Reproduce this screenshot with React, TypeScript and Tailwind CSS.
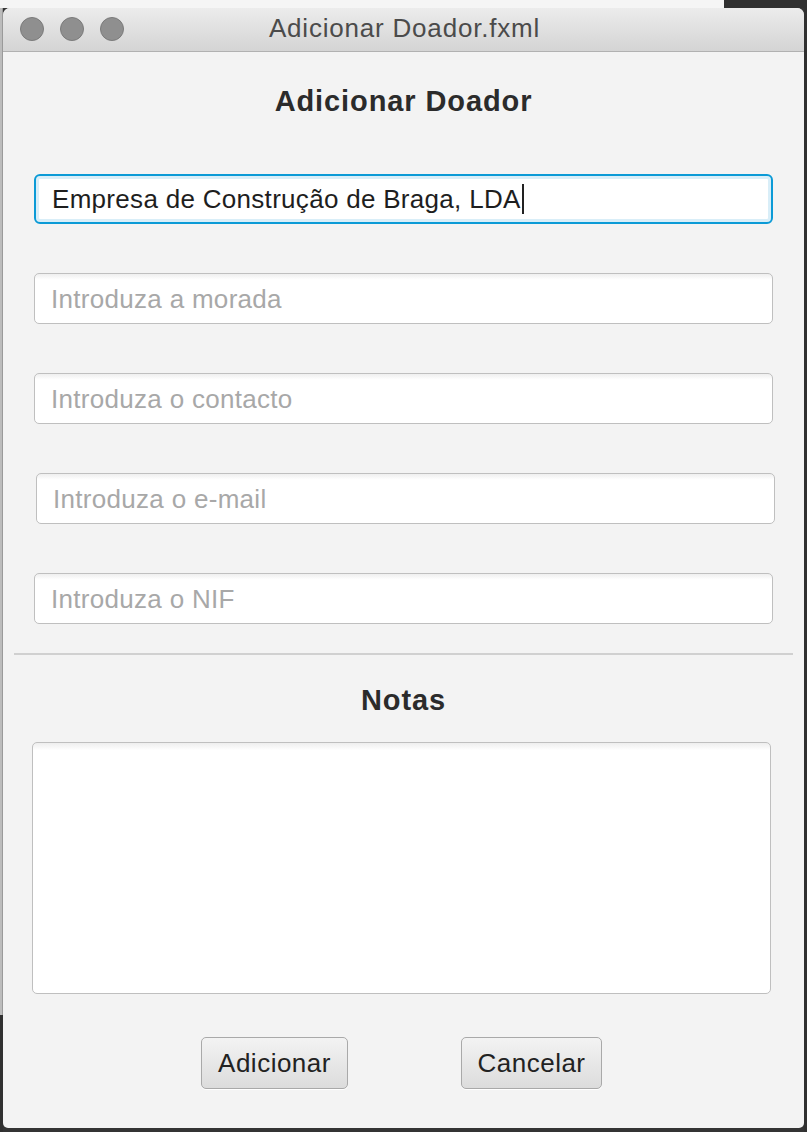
import React from "react";

const font = { fontFamily: '"Liberation Sans", Arial, Helvetica, sans-serif' };

function Field({ placeholder, shift = false }: { placeholder: string; shift?: boolean }) {
  return (
    <div className={`h-[51px] rounded-[5px] border-[1.5px] border-[#bfbfbf] bg-white bg-gradient-to-b from-[#efefef] from-0% to-white to-[12%] flex items-center pl-[16px] ${shift ? "ml-[2px] -mr-[2px]" : ""}`}>
      <span className="text-[26px] leading-none text-[#a8a8a8] tracking-[0.3px]">{placeholder}</span>
    </div>
  );
}

export default function App() {
  return (
    <div className="w-[807px] h-[1132px] bg-[#343434] overflow-hidden flex flex-col" style={font}>
      <div className="flex h-[8px] shrink-0">
        <div className="w-[724px] bg-[#f5f5f5]" />
        <div className="flex-1 bg-[#303030]" />
      </div>
      <div className="flex flex-1">
        <div className="w-[3px] flex flex-col">
          <div className="h-[1007px] bg-[#bcbcbc] border-r border-[#9a9a9a]" />
          <div className="flex-1 bg-[#303030]" />
        </div>
        <div className="w-[801px] h-[1120px] bg-[#f3f3f3] rounded-t-[7px] rounded-b-[5px] overflow-hidden flex flex-col">
          {/* title bar */}
          <div className="relative h-[44px] shrink-0 bg-gradient-to-b from-[#ececec] to-[#d4d4d4] border-b border-[#b1b1b1] flex items-center">
            <div className="flex gap-[16px] pl-[17px] -mt-[2px]">
              <div className="w-[24px] h-[24px] rounded-full bg-[#8f8f8f] border border-[#7b7b7b]" />
              <div className="w-[24px] h-[24px] rounded-full bg-[#8f8f8f] border border-[#7b7b7b]" />
              <div className="w-[24px] h-[24px] rounded-full bg-[#8f8f8f] border border-[#7b7b7b]" />
            </div>
            <div className="absolute inset-0 flex items-center justify-center pl-[2px] -mt-[2px]">
              <span className="text-[26px] text-[#4b4b4b] tracking-[0.8px]">Adicionar Doador.fxml</span>
            </div>
          </div>

          {/* content */}
          <div className="flex flex-col px-[31px]">
            <div className="mt-[30px] h-[40px] flex items-center justify-center">
              <span className="text-[29px] font-bold text-[#2b2b2b] tracking-[0.9px]">Adicionar Doador</span>
            </div>

            <div className="mt-[52px] flex flex-col gap-[49px]">
              <div className="h-[50px] rounded-[6px] border-2 border-[#0b9ad6] bg-white flex items-center pl-[16px] shadow-[inset_0_0_0_3px_#d9eef8]">
                <span className="text-[26px] leading-none text-[#1e1e1e] tracking-[0.3px]">Empresa de Construção de Braga, LDA</span>
                <span className="ml-[1px] w-[2px] h-[30px] bg-[#222]" />
              </div>
              <Field placeholder="Introduza a morada" />
              <Field placeholder="Introduza o contacto" />
              <Field placeholder="Introduza o e-mail" shift />
              <Field placeholder="Introduza o NIF" />
            </div>
          </div>

          <div className="mt-[29px] mx-[11px] h-[2px] bg-[#d0d0d0]" />

          <div className="flex flex-col px-[29px]">
            <div className="mt-[26px] h-[40px] flex items-center justify-center">
              <span className="text-[29px] font-bold text-[#2b2b2b] tracking-[0.9px]">Notas</span>
            </div>
            <div className="mt-[21px] h-[252px] mr-[4px] rounded-[5px] border-[1.5px] border-[#bfbfbf] bg-white bg-gradient-to-b from-[#eeeeee] from-0% to-white to-[3%]" />

            <div className="mt-[43px] flex justify-center gap-[113px] pr-[4px]">
              <div className="w-[147px] h-[52px] rounded-[5px] border-[1.5px] border-[#a9a9a9] bg-gradient-to-b from-[#f3f3f3] to-[#dcdcdc] flex items-center justify-center shadow-[0_1px_0_#ffffff]">
                <span className="text-[26px] text-[#222] tracking-[0.5px]">Adicionar</span>
              </div>
              <div className="w-[141px] h-[52px] rounded-[5px] border-[1.5px] border-[#a9a9a9] bg-gradient-to-b from-[#f3f3f3] to-[#dcdcdc] flex items-center justify-center shadow-[0_1px_0_#ffffff]">
                <span className="text-[26px] text-[#222] tracking-[0.5px]">Cancelar</span>
              </div>
            </div>
          </div>
        </div>
        <div className="flex-1 bg-[#303030]" />
      </div>
    </div>
  );
}
